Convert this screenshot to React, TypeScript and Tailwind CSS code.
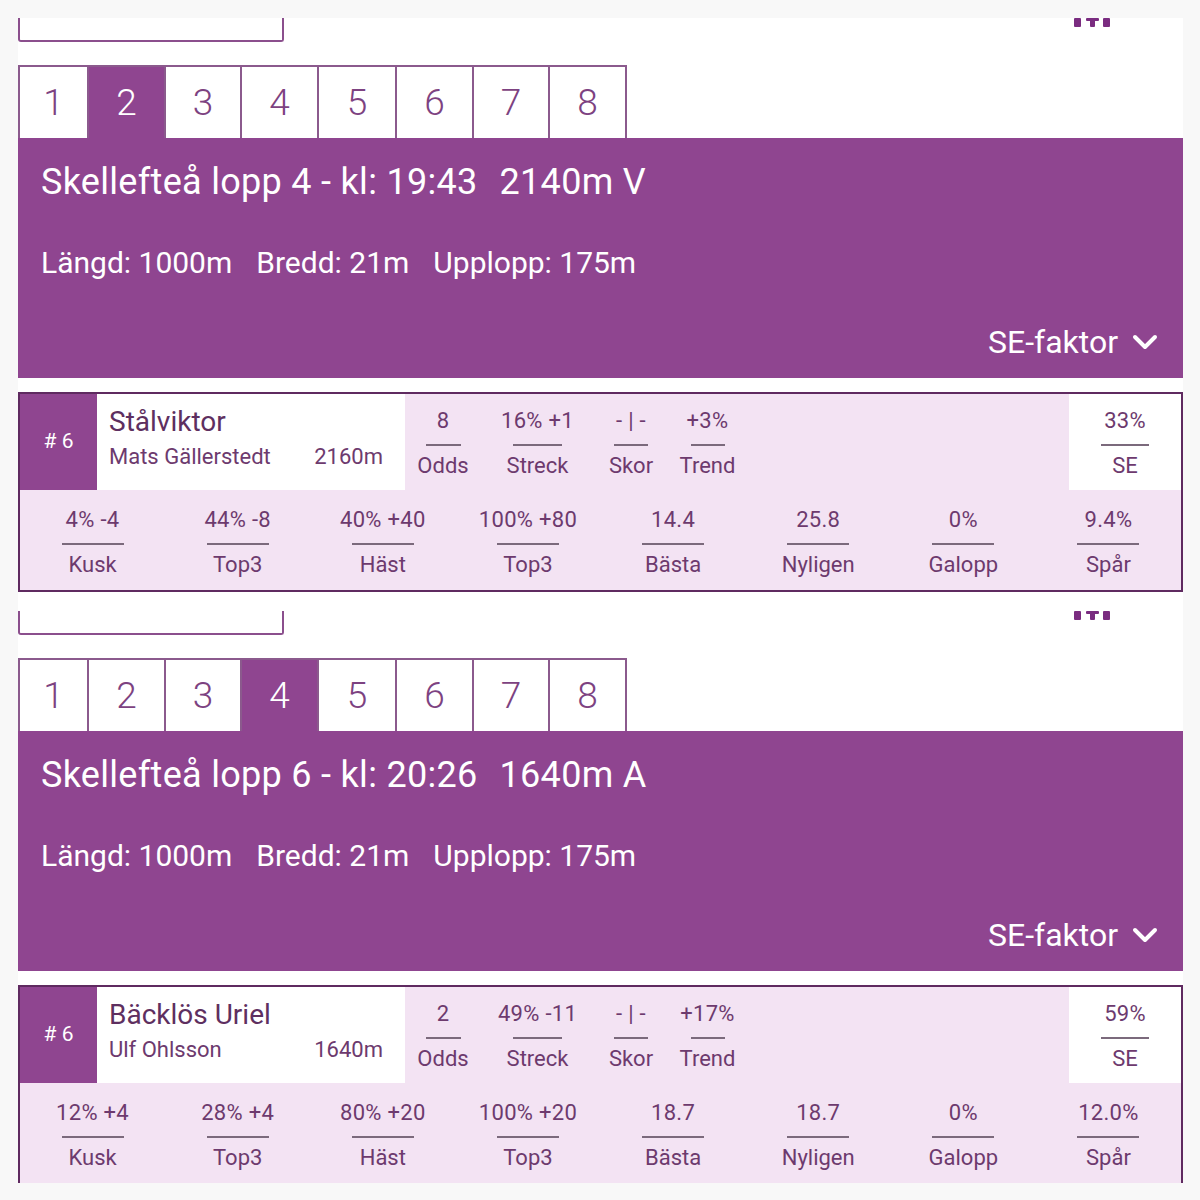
import React from "react";

type Race = {
  active: number;
  title: string;
  dist: string;
  horse: string;
  driver: string;
  horseDist: string;
  top: { value: string; label: string; w: string; line: string }[];
  se: string;
  bottom: { value: string; label: string }[];
};

const races: Race[] = [
  {
    active: 2,
    title: "Skellefteå lopp 4 - kl: 19:43",
    dist: "2140m V",
    horse: "Stålviktor",
    driver: "Mats Gällerstedt",
    horseDist: "2160m",
    top: [
      { value: "8", label: "Odds", w: "w-[76px]", line: "w-[35px]" },
      { value: "16% +1", label: "Streck", w: "w-[113px]", line: "w-[49px]" },
      { value: "- | -", label: "Skor", w: "w-[74px]", line: "w-[34px]" },
      { value: "+3%", label: "Trend", w: "w-[79px]", line: "w-[34px]" },
    ],
    se: "33%",
    bottom: [
      { value: "4% -4", label: "Kusk" },
      { value: "44% -8", label: "Top3" },
      { value: "40% +40", label: "Häst" },
      { value: "100% +80", label: "Top3" },
      { value: "14.4", label: "Bästa" },
      { value: "25.8", label: "Nyligen" },
      { value: "0%", label: "Galopp" },
      { value: "9.4%", label: "Spår" },
    ],
  },
  {
    active: 4,
    title: "Skellefteå lopp 6 - kl: 20:26",
    dist: "1640m A",
    horse: "Bäcklös Uriel",
    driver: "Ulf Ohlsson",
    horseDist: "1640m",
    top: [
      { value: "2", label: "Odds", w: "w-[76px]", line: "w-[35px]" },
      { value: "49% -11", label: "Streck", w: "w-[113px]", line: "w-[49px]" },
      { value: "- | -", label: "Skor", w: "w-[74px]", line: "w-[34px]" },
      { value: "+17%", label: "Trend", w: "w-[79px]", line: "w-[34px]" },
    ],
    se: "59%",
    bottom: [
      { value: "12% +4", label: "Kusk" },
      { value: "28% +4", label: "Top3" },
      { value: "80% +20", label: "Häst" },
      { value: "100% +20", label: "Top3" },
      { value: "18.7", label: "Bästa" },
      { value: "18.7", label: "Nyligen" },
      { value: "0%", label: "Galopp" },
      { value: "12.0%", label: "Spår" },
    ],
  },
];

const tabWidths = ["w-[69px]", "w-[77px]", "w-[76px]", "w-[77px]", "w-[78px]", "w-[77px]", "w-[76px]", "w-[79px]"];

function Stat({ value, label, line, className }: { value: string; label: string; line: string; className?: string }) {
  return (
    <div className={`flex flex-col items-center text-[#6d3a6e] ${className ?? ""}`}>
      <span className="text-[22px] leading-[22px] tracking-[0.3px] whitespace-nowrap">{value}</span>
      <span className={`mt-[12px] h-[2px] bg-[#7b6a7c] ${line}`} />
      <span className="mt-[8px] text-[22px] leading-[24px]">{label}</span>
    </div>
  );
}

function RacePanel({ race, height }: { race: Race; height: string }) {
  return (
    <div className={`ml-[18px] w-[1165px] overflow-hidden bg-white ${height}`}>
      <div className="flex h-[24px] items-start justify-between">
        <div className="h-[24px] w-[266px] rounded-b-[3px] border-2 border-t-0 border-[#8b4f8d]" />
        <svg width="37" height="10" viewBox="0 0 37 10" className="mr-[72px]">
          <rect x="0" y="0" width="7" height="9" rx="1" fill="#7a2c80" />
          <rect x="12" y="0" width="13" height="3" rx="1" fill="#7a2c80" />
          <rect x="16" y="0" width="5" height="9" rx="1" fill="#7a2c80" />
          <rect x="29" y="0" width="7" height="9" rx="1" fill="#7a2c80" />
        </svg>
      </div>

      <div className="mt-[23px] flex h-[73px]">
        {tabWidths.map((w, i) => {
          const n = i + 1;
          const on = n === race.active;
          return (
            <div
              key={n}
              className={`flex items-center justify-center border-t-2 border-l-2 border-[#8b5a8d] ${w} ${
                i === tabWidths.length - 1 ? "border-r-2" : ""
              } ${on ? "bg-[#8f4590] text-white" : "bg-white text-[#7d4281]"}`}
            >
              <span className="text-[37px] font-light leading-none">{n}</span>
            </div>
          );
        })}
      </div>

      <div className="flex h-[240px] flex-col bg-[#8f4590] px-[23px] text-white">
        <div className="mt-[24px] flex gap-[22px] text-[36px] leading-[40px] tracking-[0.3px]">
          <span>{race.title}</span>
          <span>{race.dist}</span>
        </div>
        <div className="mt-[41px] flex gap-[24px] text-[30px] leading-[40px]">
          <span>Längd: 1000m</span>
          <span>Bredd: 21m</span>
          <span>Upplopp: 175m</span>
        </div>
        <div className="mt-[39px] flex items-center justify-end gap-[14px] pr-[2px] text-[32px] leading-[40px]">
          <span>SE-faktor</span>
          <svg width="26" height="18" viewBox="0 0 26 18">
            <polyline points="3,4 13,14 23,4" fill="none" stroke="white" strokeWidth="4" strokeLinecap="round" strokeLinejoin="round" />
          </svg>
        </div>
      </div>

      <div className="mt-[14px] h-[200px] border-2 border-[#5f2a60] bg-[#f3e3f3]">
        <div className="flex h-[96px]">
          <div className="flex w-[77px] items-center justify-center bg-[#8f4590] text-[21px] text-white">
            # 6
          </div>
          <div className="flex w-[308px] flex-col bg-white pl-[12px] pr-[22px]">
            <span className="mt-[13px] text-[28px] leading-[30px] text-[#5e2f60]">{race.horse}</span>
            <div className="mt-[8px] flex items-center justify-between text-[22px] leading-[24px] text-[#6d3a6e]">
              <span>{race.driver}</span>
              <span>{race.horseDist}</span>
            </div>
          </div>
          <div className="flex pt-[16px]">
            {race.top.map((s) => (
              <Stat key={s.label} value={s.value} label={s.label} line={s.line} className={s.w} />
            ))}
          </div>
          <div className="flex-1" />
          <div className="flex w-[112px] justify-center bg-white pt-[16px]">
            <Stat value={race.se} label="SE" line="w-[48px]" />
          </div>
        </div>
        <div className="grid h-[100px] grid-cols-8 pt-[19px]">
          {race.bottom.map((s, i) => (
            <Stat key={i} value={s.value} label={s.label} line="w-[62px]" />
          ))}
        </div>
      </div>
    </div>
  );
}

export default function App() {
  return (
    <div className="h-[1200px] w-[1200px] overflow-hidden bg-[#f8f8f8] pt-[18px] font-['Roboto','Noto_Sans',sans-serif]">
      <RacePanel race={races[0]} height="h-[593px]" />
      <RacePanel race={races[1]} height="h-[572px]" />
    </div>
  );
}
